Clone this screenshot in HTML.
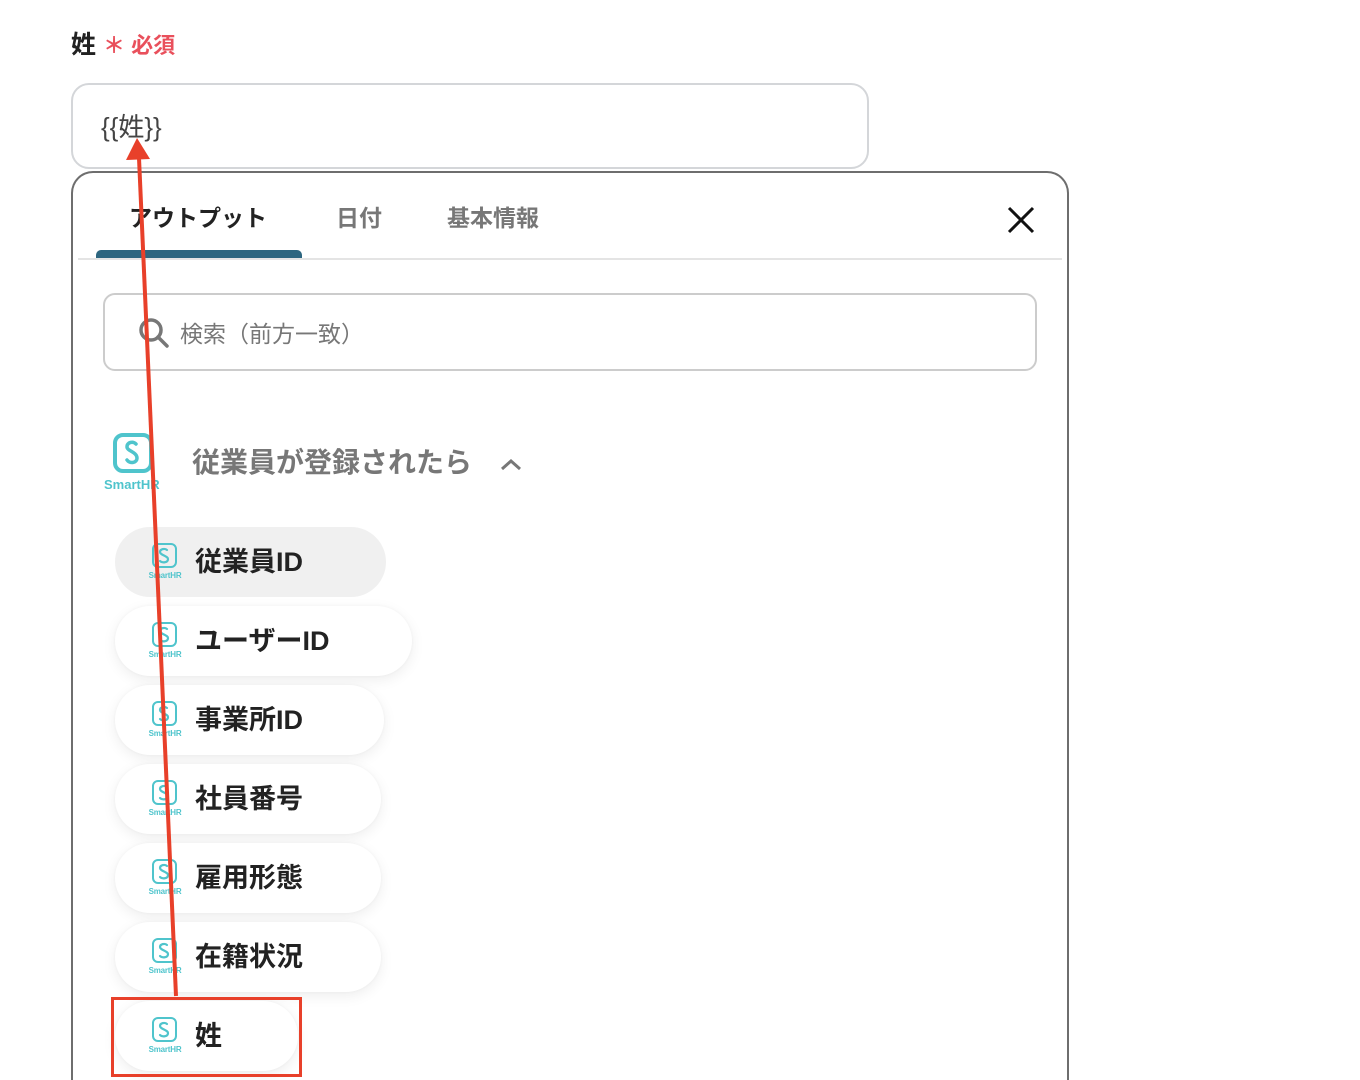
<!DOCTYPE html>
<html><head><meta charset="utf-8"><style>
*{margin:0;padding:0;box-sizing:border-box}
html,body{width:1360px;height:1080px;overflow:hidden}
body{background:#fff;position:relative;font-family:"Liberation Sans","Noto Sans CJK JP",sans-serif}
.a{position:absolute}
.pill{position:absolute;left:115px;height:70px;border-radius:35px;background:#fff;box-shadow:0 4px 14px rgba(0,0,0,0.07),0 0 3px rgba(0,0,0,0.04)}
.pill .t{position:absolute;left:80px;top:17px;font-size:27px;font-weight:bold;color:#222;line-height:36px;white-space:nowrap}
.ic{position:absolute;left:31px;top:16px;width:40px;height:40px}
.ic .sq{position:absolute;left:6px;top:0;width:25px;height:25px;border:2.5px solid #4fc4cc;border-radius:6px}
.ic .sq svg{position:absolute;left:3px;top:2px}
.ic .lb{position:absolute;left:0;top:28px;width:38px;font-size:8px;color:#4fc4cc;font-weight:bold;text-align:center;letter-spacing:-0.2px}
</style></head><body>
<div class="a" style="left:71px;top:29px;font-size:25px;font-weight:bold;color:#222;line-height:32px">姓</div>
<div class="a" style="left:103px;top:31px;font-size:22px;font-weight:bold;color:#e9505c;line-height:30px">＊ 必須</div>
<div class="a" style="left:71px;top:83px;width:798px;height:86px;border:2px solid #d4d6d9;border-radius:18px"></div>
<div class="a" style="left:101px;top:109px;font-size:26px;color:#444;line-height:36px">{{姓}}</div>

<div class="a" style="left:71px;top:171px;width:998px;height:960px;border:2px solid #6e6e6e;border-radius:22px;border-bottom:none"></div>
<div class="a" style="left:129px;top:202px;font-size:23px;font-weight:bold;color:#222;line-height:32px">アウトプット</div>
<div class="a" style="left:336px;top:202px;font-size:23px;font-weight:bold;color:#777;line-height:32px">日付</div>
<div class="a" style="left:447px;top:202px;font-size:23px;font-weight:bold;color:#777;line-height:32px">基本情報</div>
<div class="a" style="left:96px;top:250px;width:206px;height:8px;background:#2d6680;border-radius:5px 5px 0 0"></div>
<div class="a" style="left:78px;top:258px;width:984px;height:2px;background:#e4e4e4"></div>
<svg class="a" style="left:1006px;top:205px" width="30" height="30"><path d="M3 3L27 27M27 3L3 27" stroke="#111" stroke-width="3"/></svg>

<div class="a" style="left:103px;top:293px;width:934px;height:78px;border:2px solid #ccc;border-radius:12px"></div>
<svg class="a" style="left:137px;top:316px" width="34" height="34"><circle cx="14" cy="14" r="10" fill="none" stroke="#777" stroke-width="3.5"/><path d="M21 21L30 30" stroke="#777" stroke-width="3.5" stroke-linecap="round"/></svg>
<div class="a" style="left:180px;top:318px;font-size:23px;color:#777;line-height:32px">検索（前方一致）</div>

<div class="a" style="left:113px;top:433px;width:40px;height:40px;border:4px solid #4fc4cc;border-radius:10px"></div>
<svg class="a" style="left:121px;top:439px" width="24" height="28"><path d="M15 5C12 2 6 3 6 8C6 12 16 13 16 19C16 24 9 25 6 21" fill="none" stroke="#4fc4cc" stroke-width="3.5" stroke-linecap="round"/></svg>
<div class="a" style="left:104px;top:476px;font-size:13px;font-weight:bold;color:#4fc4cc;line-height:18px">SmartHR</div>
<div class="a" style="left:192px;top:445px;font-size:28px;font-weight:bold;color:#777;line-height:36px">従業員が登録されたら</div>
<svg class="a" style="left:499px;top:456px" width="24" height="16"><path d="M3 13L12 5L21 13" fill="none" stroke="#777" stroke-width="3"/></svg>

<div class="pill" style="top:527px;width:271px;background:#f0f0f0;box-shadow:none"><div class="ic"><div class="sq"><svg width="15" height="18"><path d="M10 3C8 1 3 2 3 5C3 8 11 9 11 12C11 16 5 16 3 14" fill="none" stroke="#4fc4cc" stroke-width="2.2" stroke-linecap="round"/></svg></div><div class="lb">SmartHR</div></div><div class="t">従業員ID</div></div>
<div class="pill" style="top:606px;width:297px"><div class="ic"><div class="sq"><svg width="15" height="18"><path d="M10 3C8 1 3 2 3 5C3 8 11 9 11 12C11 16 5 16 3 14" fill="none" stroke="#4fc4cc" stroke-width="2.2" stroke-linecap="round"/></svg></div><div class="lb">SmartHR</div></div><div class="t">ユーザーID</div></div>
<div class="pill" style="top:685px;width:269px"><div class="ic"><div class="sq"><svg width="15" height="18"><path d="M10 3C8 1 3 2 3 5C3 8 11 9 11 12C11 16 5 16 3 14" fill="none" stroke="#4fc4cc" stroke-width="2.2" stroke-linecap="round"/></svg></div><div class="lb">SmartHR</div></div><div class="t">事業所ID</div></div>
<div class="pill" style="top:764px;width:266px"><div class="ic"><div class="sq"><svg width="15" height="18"><path d="M10 3C8 1 3 2 3 5C3 8 11 9 11 12C11 16 5 16 3 14" fill="none" stroke="#4fc4cc" stroke-width="2.2" stroke-linecap="round"/></svg></div><div class="lb">SmartHR</div></div><div class="t">社員番号</div></div>
<div class="pill" style="top:843px;width:266px"><div class="ic"><div class="sq"><svg width="15" height="18"><path d="M10 3C8 1 3 2 3 5C3 8 11 9 11 12C11 16 5 16 3 14" fill="none" stroke="#4fc4cc" stroke-width="2.2" stroke-linecap="round"/></svg></div><div class="lb">SmartHR</div></div><div class="t">雇用形態</div></div>
<div class="pill" style="top:922px;width:266px"><div class="ic"><div class="sq"><svg width="15" height="18"><path d="M10 3C8 1 3 2 3 5C3 8 11 9 11 12C11 16 5 16 3 14" fill="none" stroke="#4fc4cc" stroke-width="2.2" stroke-linecap="round"/></svg></div><div class="lb">SmartHR</div></div><div class="t">在籍状況</div></div>
<div class="pill" style="top:1001px;width:183px"><div class="ic"><div class="sq"><svg width="15" height="18"><path d="M10 3C8 1 3 2 3 5C3 8 11 9 11 12C11 16 5 16 3 14" fill="none" stroke="#4fc4cc" stroke-width="2.2" stroke-linecap="round"/></svg></div><div class="lb">SmartHR</div></div><div class="t">姓</div></div>

<div class="a" style="left:111px;top:997px;width:191px;height:80px;border:3.5px solid #e8402a"></div>
<svg class="a" style="left:0;top:0" width="1360" height="1080"><path d="M176 996L139 158" stroke="#e8402a" stroke-width="4"/><path d="M137 138L126 160L150 159Z" fill="#e8402a"/></svg>
</body></html>
